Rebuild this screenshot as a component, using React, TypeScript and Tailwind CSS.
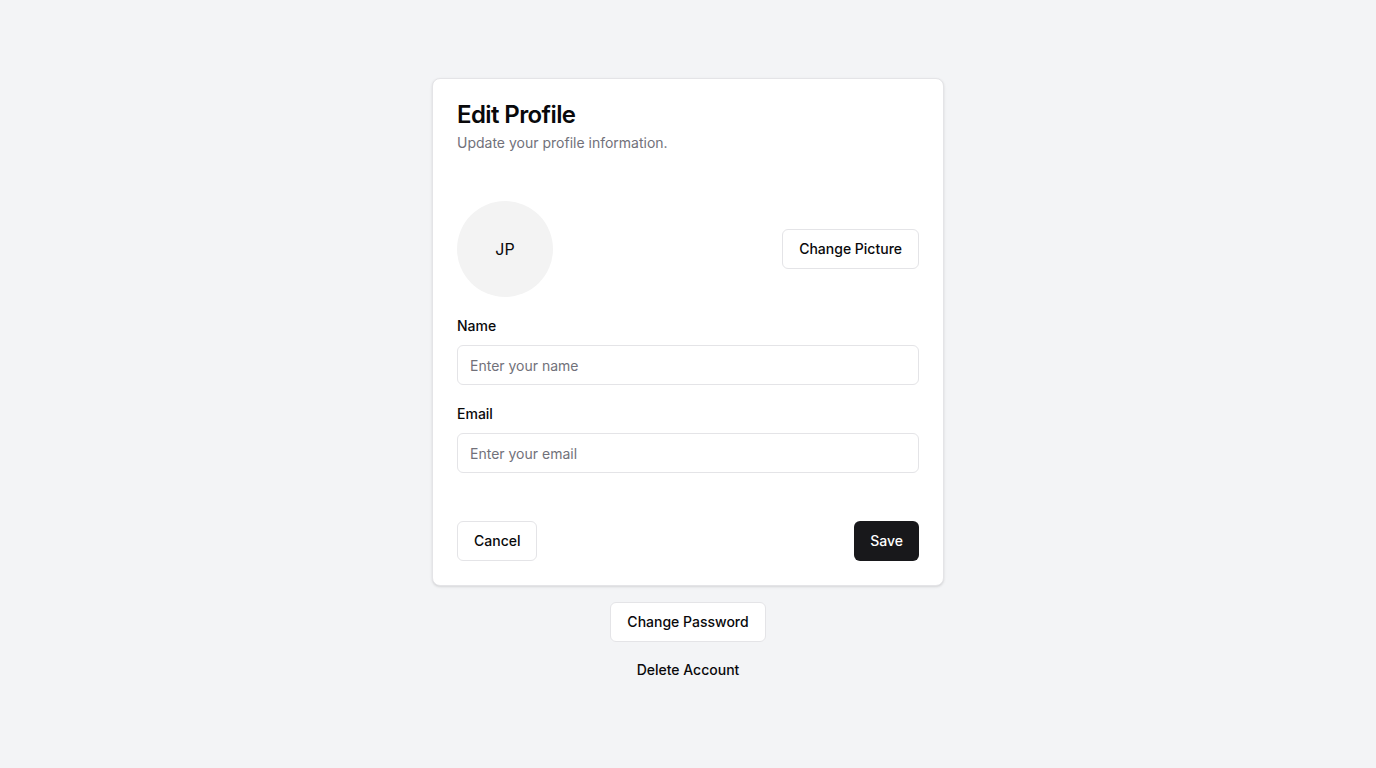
import { useState } from 'react';

export default function App() {
  const [name, setName] = useState('');
  const [email, setEmail] = useState('');

  return (
    <div
      className="min-h-screen bg-[#f3f4f6] flex flex-col items-center justify-center text-[#09090b]"
      style={{ fontFamily: 'Inter, "Liberation Sans", sans-serif' }}
    >
      <div className="w-[512px] rounded-lg border border-[#e4e4e7] bg-white shadow-sm">
        <div className="p-6 flex flex-col gap-1.5">
          <h1 className="text-2xl font-semibold leading-none tracking-tight">Edit Profile</h1>
          <p className="text-sm text-[#71717a]">Update your profile information.</p>
        </div>

        <div className="px-6 pt-6">
          <div className="flex items-center justify-between">
            <div className="w-24 h-24 rounded-full bg-[#f3f3f3] flex items-center justify-center text-base">
              JP
            </div>
            <button className="h-10 px-4 rounded-md border border-[#e4e4e7] bg-white text-sm font-medium">
              Change Picture
            </button>
          </div>

          <div className="mt-5">
            <label className="block text-sm font-medium leading-[18px]">Name</label>
            <input
              value={name}
              onChange={(e) => setName(e.target.value)}
              placeholder="Enter your name"
              className="mt-2.5 w-full h-10 rounded-md border border-[#e4e4e7] px-3 text-sm placeholder:text-[#71717a] outline-none"
            />
          </div>

          <div className="mt-5">
            <label className="block text-sm font-medium leading-[18px]">Email</label>
            <input
              value={email}
              onChange={(e) => setEmail(e.target.value)}
              placeholder="Enter your email"
              className="mt-2.5 w-full h-10 rounded-md border border-[#e4e4e7] px-3 text-sm placeholder:text-[#71717a] outline-none"
            />
          </div>
        </div>

        <div className="p-6 mt-6 flex items-center justify-between">
          <button className="h-10 px-4 rounded-md border border-[#e4e4e7] bg-white text-sm font-medium">
            Cancel
          </button>
          <button className="h-10 px-4 rounded-md bg-[#18181b] text-white text-sm font-medium">
            Save
          </button>
        </div>
      </div>

      <div className="mt-4 flex flex-col items-center gap-2">
        <button className="h-10 px-4 rounded-md border border-[#e4e4e7] bg-white text-sm font-medium">
          Change Password
        </button>
        <button className="h-10 px-4 rounded-md text-sm font-medium">Delete Account</button>
      </div>
    </div>
  );
}
